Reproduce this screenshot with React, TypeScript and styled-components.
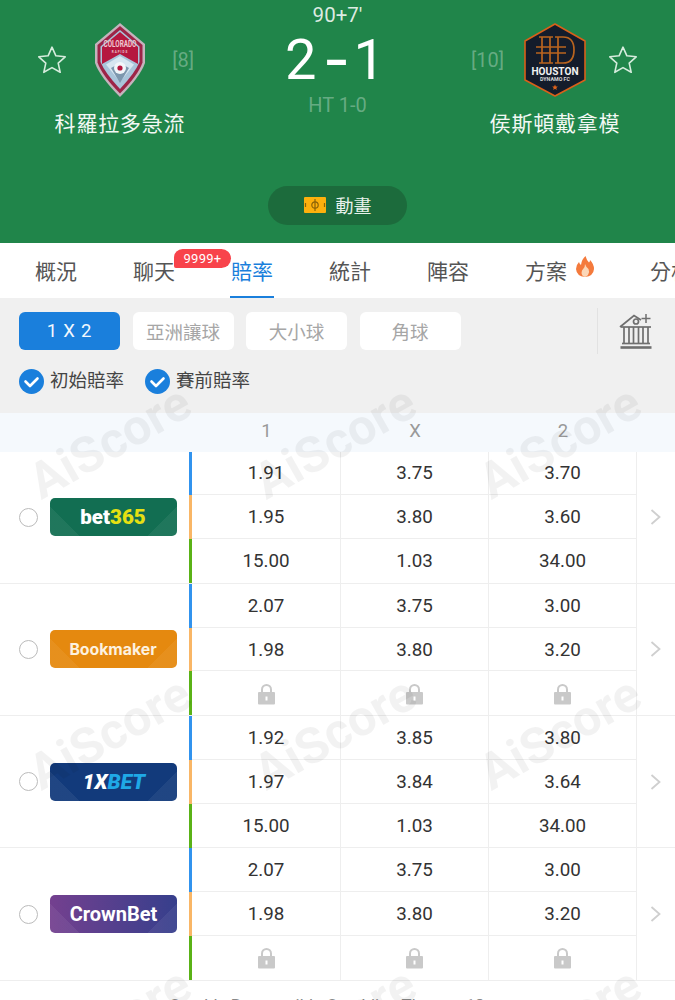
import React from "react";
import styled, { createGlobalStyle } from "styled-components";

const Global = createGlobalStyle`
  html, body { margin: 0; padding: 0; background: #fff; }
  body { font-family: Roboto, "Noto Sans CJK TC", sans-serif; }
  * { box-sizing: border-box; }
`;

const Page = styled.div`
  width: 675px;
  height: 1000px;
  overflow: hidden;
  background: #fff;
`;

const Header = styled.header`
  height: 243px;
  background: #20854a;
  display: grid;
  grid-template-columns: 240px 195px 240px;
`;

const Team = styled.div`
  padding-top: 23px;
  display: flex;
  flex-direction: column;
`;

const TeamTop = styled.div`
  height: 74px;
  display: grid;
  grid-template-columns: 1fr auto 1fr;
  align-items: center;
`;

const StarSlot = styled.div<{ $side: "left" | "right" }>`
  display: flex;
  justify-content: ${(p) => (p.$side === "left" ? "flex-start" : "flex-end")};
  ${(p) => (p.$side === "left" ? "padding-left: 37px;" : "padding-right: 37px;")}
`;

const Rank = styled.div<{ $side: "left" | "right" }>`
  font-size: 20px;
  color: rgba(255, 255, 255, 0.33);
  text-align: ${(p) => p.$side};
  ${(p) => (p.$side === "left" ? "padding-left: 36px;" : "padding-right: 46px;")}
`;

const TeamName = styled.div`
  margin-top: 12px;
  height: 30px;
  line-height: 30px;
  text-align: center;
  font-size: 21px;
  color: #f2f8f4;
  letter-spacing: 0.8px;
`;

const Center = styled.div`
  display: flex;
  flex-direction: column;
  align-items: center;
`;

const Clock = styled.div`
  height: 30px;
  line-height: 30px;
  font-size: 20.5px;
  color: rgba(255, 255, 255, 0.85);
`;

const Score = styled.div`
  height: 60px;
  line-height: 60px;
  font-size: 56px;
  color: #fff;
  display: flex;
  padding-right: 5px;
`;

const ScoreDash = styled.span`
  margin: 0 7px 0 11px;
  font-weight: 500;
  transform: scaleX(1.3);
`;

const HalfTime = styled.div`
  height: 30px;
  line-height: 30px;
  font-size: 20px;
  color: rgba(255, 255, 255, 0.33);
`;

const AnimationPill = styled.div`
  margin-top: 66px;
  width: 139px;
  height: 39px;
  border-radius: 20px;
  background: #1c6b3c;
  color: #e8f2ec;
  font-size: 18px;
  display: flex;
  align-items: center;
  justify-content: center;
  gap: 10px;
  padding-bottom: 1px;
`;

const Tabs = styled.nav`
  height: 55px;
  display: flex;
  padding-left: 7px;
  overflow: hidden;
  background: #fff;
`;

const Tab = styled.div<{ $active?: boolean }>`
  position: relative;
  flex: none;
  height: 55px;
  padding: 0 28px 2px;
  display: flex;
  align-items: center;
  gap: 9px;
  font-size: 21px;
  white-space: nowrap;
  color: ${(p) => (p.$active ? "#1a7fdc" : "#555")};
  ${(p) =>
    p.$active &&
    `&::after {
      content: "";
      position: absolute;
      left: 27px;
      right: 27px;
      bottom: 0;
      height: 2.5px;
      background: #1a7fdc;
    }`}
`;

const Badge = styled.span`
  position: absolute;
  left: 69px;
  top: 6px;
  height: 19px;
  width: 57px;
  border-radius: 9px 10px 10px 2px;
  background: #f8434b;
  color: #fff;
  font-size: 13px;
  line-height: 19px;
  text-align: center;
  letter-spacing: 0.3px;
`;

const Filters = styled.section`
  height: 115px;
  background: #f0f0f0;
  padding: 14px 22px 0 19px;
`;

const MarketRow = styled.div`
  height: 38px;
  display: flex;
  align-items: center;
  gap: 12.5px;
`;

const MarketButton = styled.div<{ $active?: boolean }>`
  width: 101px;
  height: 38px;
  border-radius: 6px;
  padding-bottom: 1px;
  background: ${(p) => (p.$active ? "#1a7fdc" : "#fff")};
  color: ${(p) => (p.$active ? "#f2f8fe" : "#a6a6a6")};
  font-size: 18.5px;
  display: flex;
  align-items: center;
  justify-content: center;
  letter-spacing: ${(p) => (p.$active ? "0.8px" : "0")};
`;

const Divider = styled.div`
  width: 1px;
  height: 46px;
  flex: none;
  margin-left: auto;
  background: #e2e2e2;
`;

const BankSlot = styled.div`
  width: 34px;
  height: 36px;
  margin-left: 9px;
  flex: none;
`;

const CheckRow = styled.div`
  margin-top: 19px;
  display: flex;
  gap: 21px;
`;

const CheckItem = styled.div`
  display: flex;
  align-items: center;
  gap: 6px;
  font-size: 18.5px;
  line-height: 25px;
  color: #444;
`;

const TableArea = styled.section`
  position: relative;
  height: 587px;
`;

const WatermarkLayer = styled.div`
  position: absolute;
  left: -3px;
  top: -117px;
  display: grid;
  grid-template-columns: repeat(3, 225px);
  grid-auto-rows: 291px;
  pointer-events: none;
`;

const Watermark = styled.div`
  display: flex;
  align-items: center;
  justify-content: center;
  font-size: 50px;
  font-weight: 700;
  font-family: Roboto, sans-serif;
  color: rgba(0, 0, 0, 0.05);
  transform: rotate(-29.5deg);
  white-space: nowrap;
`;

const HeadRow = styled.div`
  height: 38.5px;
  padding-bottom: 2px;
  background: #f5f9fd;
  display: grid;
  grid-template-columns: 192px 149px 148px 148px;
  align-items: center;
  text-align: center;
  font-size: 18.5px;
  color: #999;
`;

const OddsRow = styled.div`
  height: 132.33px;
  display: flex;
  border-bottom: 1px solid #eee;
`;

const Maker = styled.div`
  width: 189px;
  flex: none;
  padding-left: 19px;
  display: flex;
  align-items: center;
  gap: 12px;
`;

const Radio = styled.div`
  width: 19px;
  height: 19px;
  flex: none;
  border-radius: 50%;
  border: 1.5px solid #bbb;
`;

const Logo = styled.div<{ $bg: string }>`
  width: 127px;
  height: 38px;
  flex: none;
  border-radius: 5px;
  background: linear-gradient(135deg, transparent 82%, rgba(255, 255, 255, 0.06) 82%),
    linear-gradient(225deg, transparent 82%, rgba(255, 255, 255, 0.06) 82%), ${(p) => p.$bg};
  display: flex;
  align-items: center;
  justify-content: center;
  color: #fff;
  font-weight: 700;
  font-size: 20px;
  white-space: nowrap;
`;

const LogoAccent = styled.span<{ $color: string }>`
  color: ${(p) => p.$color};
`;

const Bet365Name = styled.span`
  font-weight: 900;
  font-size: 20.5px;
  margin-left: -1px;
`;

const BookmakerName = styled.span`
  font-family: Inter, sans-serif;
  font-size: 15.8px;
  color: #fdf2e0;
  margin-left: -1px;
`;

const ItalicName = styled.span`
  font-style: italic;
  font-weight: 900;
  font-size: 21px;
  margin-left: 1px;
`;

const Lines = styled.div`
  display: flex;
  flex-direction: column;
  flex: none;
`;

const Line = styled.div<{ $bar: string }>`
  flex: 1;
  display: grid;
  grid-template-columns: 149px 148px 148px;
  border-left: 3px solid ${(p) => p.$bar};
  &:not(:last-child) > div {
    border-bottom: 1px solid #eee;
  }
`;

const Cell = styled.div`
  display: flex;
  align-items: center;
  justify-content: center;
  font-size: 18.8px;
  color: #333;
  border-right: 1px solid #eee;
  padding-top: 1px;
`;

const Arrow = styled.div`
  flex: 1;
  display: flex;
  align-items: center;
  justify-content: center;
  padding-right: 1px;
`;

const Footer = styled.div`
  padding: 13px 12px 0 0;
  line-height: 22px;
  text-align: center;
  font-size: 16.8px;
  color: #888;
`;

const FlameSvg = styled.svg`
  margin-top: -7px;
`;

const Star = () => (
  <svg width="30" height="30" viewBox="0 0 30 30" fill="none" aria-hidden>
    <path
      d="M15 2.2l3.9 8.6 9.3 1-7 6.3 2 9.2-8.200-4.700-8.200 4.700 2-9.200-7-6.300 9.300-1z"
      stroke="#d6ecdd"
      strokeWidth="1.6"
      strokeLinejoin="round"
    />
  </svg>
);

const ColoradoCrest = () => (
  <svg width="50" height="74" viewBox="0 0 50 74" aria-hidden>
    <path d="M25 0L50 21V40Q45 54 25 74Q5 54 0 40V21Z" fill="#c5b3bd" />
    <path d="M25 3L47.500 22V39.500Q43 52.500 25 70.500Q7 52.500 2.500 39.500V22Z" fill="#9d2447" />
    <path d="M25 7L44.500 23.500V39Q40 50 25 66Q10 50 5.500 39V23.500Z" fill="#a9c4da" />
    <path d="M25 9L43 24V41L25 31L7 41V24Z" fill="#b5173f" />
    <text x="25" y="24" textAnchor="middle" fontSize="8.200" fontWeight="700" fontFamily="Roboto, sans-serif" fill="#f0c8d0" textLength="33" lengthAdjust="spacingAndGlyphs">
      COLORADO
    </text>
    <text x="25" y="29.500" textAnchor="middle" fontSize="3" fontWeight="700" fontFamily="Roboto, sans-serif" fill="#e9c9d0" letterSpacing="1">
      RAPIDS
    </text>
    <path d="M25 33L39 41.500L25 59L11 41.500Z" fill="#d7e6f1" />
    <path d="M25 40L34 45L25 60L16 45Z" fill="#7d97ae" />
    <circle cx="25" cy="45" r="6" fill="#f2f6fa" />
    <circle cx="25" cy="45" r="2.600" fill="#b5173f" />
  </svg>
);

const HoustonCrest = () => (
  <svg width="62" height="74" viewBox="0 0 62 74" aria-hidden>
    <path d="M31 1L61 18V57L31 73L1 57V18Z" fill="#141c2b" stroke="#d9601a" strokeWidth="1.600" strokeLinejoin="round" />
    <g fill="none" stroke="#b9641f" strokeWidth="1.700">
      <path d="M18 14V40M26 14V40M15 14H29M15 40H29" />
      <path d="M34 14V40M31 14H39Q50 14 50 27Q50 40 39 40H31" />
      <path d="M12 24H42M12 30H42" />
    </g>
    <text x="31" y="52" textAnchor="middle" fontSize="10" fontWeight="700" fontFamily="Roboto, sans-serif" fill="#f2f2f2" textLength="47" lengthAdjust="spacingAndGlyphs">
      HOUSTON
    </text>
    <text x="31" y="57.500" textAnchor="middle" fontSize="4.500" fontWeight="700" fontFamily="Roboto, sans-serif" fill="#d9d9d9" textLength="30" lengthAdjust="spacingAndGlyphs">
      DYNAMO FC
    </text>
    <path d="M31 61.500l.8 1.900 2 .2-1.500 1.300.5 2-1.800-1.100-1.800 1.100.5-2-1.500-1.300 2-.2z" fill="#e0631b" />
  </svg>
);

const FieldIcon = () => (
  <svg width="22" height="16" viewBox="0 0 22 16" aria-hidden>
    <rect width="22" height="16" fill="#fdb00d" rx="1" />
    <path d="M11 2V14M1.500 6V10M20.500 6V10" stroke="#8a6208" strokeWidth="1.200" fill="none" />
    <circle cx="11" cy="8" r="3.200" stroke="#8a6208" strokeWidth="1.200" fill="none" />
  </svg>
);

const Flame = () => (
  <FlameSvg width="18" height="21" viewBox="0 0 18 21" aria-hidden>
    <path d="M9.500 0Q10.500 4 13 6.500Q14 5.500 14 4Q18 8 18 13Q17.500 20 9 21Q.5 20 0 13Q0 9 3 6Q3.500 8 5 9Q5.500 3.500 9.500 0Z" fill="#f47a3c" />
    <path d="M9 8Q10 11 12.500 13Q14 16 12 19Q10 21 9 21Q6 20.500 5.500 17Q5.500 14 7.500 12.500Q9 11 9 8Z" fill="#fbd7b8" />
  </FlameSvg>
);

const Bank = () => (
  <svg width="34" height="36" viewBox="0 0 34 36" fill="none" stroke="#6f6f6f" strokeWidth="1.700" aria-hidden>
    <path d="M1 14L15 2.500L22 7" />
    <path d="M2 14H32" />
    <circle cx="17" cy="8.500" r="2.500" />
    <path d="M27 1V10M22.500 5.500H31.500" strokeWidth="1.500" />
    <path d="M5 14V30M10 14V30M14.500 14V30M19.500 14V30M24 14V30M29 14V30" />
    <path d="M3 30.500H31" />
    <path d="M1.500 34.500H32.500" strokeWidth="2.600" />
  </svg>
);

const CheckedDot = () => (
  <svg width="25" height="25" viewBox="0 0 25 25" aria-hidden>
    <circle cx="12.500" cy="12.500" r="12.500" fill="#1a7fdc" />
    <path d="M6.500 12.500L11 17L18.500 9.500" stroke="#fff" strokeWidth="2.600" fill="none" strokeLinecap="round" strokeLinejoin="round" />
  </svg>
);

const Lock = () => (
  <svg width="17" height="22" viewBox="0 0 17 22" aria-hidden>
    <path d="M4 10V6.500a4.500 4.500 0 0 1 9 0V10" stroke="#c9c9c9" strokeWidth="2" fill="none" />
    <path fillRule="evenodd" d="M1 9h15a1 1 0 0 1 1 1v10.500a1 1 0 0 1-1 1H1a1 1 0 0 1-1-1V10a1 1 0 0 1 1-1zM7.500 13.500v4h2v-4z" fill="#c9c9c9" />
  </svg>
);

const Chevron = () => (
  <svg width="11" height="16" viewBox="0 0 11 16" fill="none" aria-hidden>
    <path d="M1.500 1L9.500 8L1.500 15" stroke="#cfcfcf" strokeWidth="1.800" />
  </svg>
);

const BARS = ["#3193ee", "#f9b666", "#5ab217"];

type Book = { key: string; bg: string; logo: React.ReactNode; rows: (string[] | null)[] };

const BOOKS: Book[] = [
  {
    key: "bet365",
    bg: "#126e52",
    logo: (
      <Bet365Name>
        bet<LogoAccent $color="#e6e012">365</LogoAccent>
      </Bet365Name>
    ),
    rows: [
      ["1.91", "3.75", "3.70"],
      ["1.95", "3.80", "3.60"],
      ["15.00", "1.03", "34.00"],
    ],
  },
  {
    key: "bookmaker",
    bg: "#e5890f",
    logo: <BookmakerName>Bookmaker</BookmakerName>,
    rows: [
      ["2.07", "3.75", "3.00"],
      ["1.98", "3.80", "3.20"],
      null,
    ],
  },
  {
    key: "1xbet",
    bg: "#123a7b",
    logo: (
      <ItalicName>
        1X<LogoAccent $color="#1fa8e6">BET</LogoAccent>
      </ItalicName>
    ),
    rows: [
      ["1.92", "3.85", "3.80"],
      ["1.97", "3.84", "3.64"],
      ["15.00", "1.03", "34.00"],
    ],
  },
  {
    key: "crownbet",
    bg: "linear-gradient(90deg, #74408f, #363f8c)",
    logo: "CrownBet",
    rows: [
      ["2.07", "3.75", "3.00"],
      ["1.98", "3.80", "3.20"],
      null,
    ],
  },
];

const TABS = ["概況", "聊天", "賠率", "統計", "陣容", "方案", "分析"];
const MARKETS = ["1 X 2", "亞洲讓球", "大小球", "角球"];

export default function App() {
  return (
    <Page>
      <Global />
      <Header>
        <Team>
          <TeamTop>
            <StarSlot $side="left">
              <Star />
            </StarSlot>
            <ColoradoCrest />
            <Rank $side="right">[8]</Rank>
          </TeamTop>
          <TeamName>科羅拉多急流</TeamName>
        </Team>
        <Center>
          <Clock>90+7'</Clock>
          <Score>
            <span>2</span>
            <ScoreDash>-</ScoreDash>
            <span>1</span>
          </Score>
          <HalfTime>HT 1-0</HalfTime>
          <AnimationPill>
            <FieldIcon />
            動畫
          </AnimationPill>
        </Center>
        <Team>
          <TeamTop>
            <Rank $side="left">[10]</Rank>
            <HoustonCrest />
            <StarSlot $side="right">
              <Star />
            </StarSlot>
          </TeamTop>
          <TeamName>侯斯頓戴拿模</TeamName>
        </Team>
      </Header>

      <Tabs>
        {TABS.map((t) => (
          <Tab key={t} $active={t === "賠率"}>
            {t}
            {t === "聊天" && <Badge>9999+</Badge>}
            {t === "方案" && <Flame />}
          </Tab>
        ))}
      </Tabs>

      <Filters>
        <MarketRow>
          {MARKETS.map((m, i) => (
            <MarketButton key={m} $active={i === 0}>
              {m}
            </MarketButton>
          ))}
          <Divider />
          <BankSlot>
            <Bank />
          </BankSlot>
        </MarketRow>
        <CheckRow>
          <CheckItem>
            <CheckedDot />
            初始賠率
          </CheckItem>
          <CheckItem>
            <CheckedDot />
            賽前賠率
          </CheckItem>
        </CheckRow>
      </Filters>

      <TableArea>
        <HeadRow>
          <span />
          <span>1</span>
          <span>X</span>
          <span>2</span>
        </HeadRow>
        {BOOKS.map((b) => (
          <OddsRow key={b.key}>
            <Maker>
              <Radio />
              <Logo $bg={b.bg}>{b.logo}</Logo>
            </Maker>
            <Lines>
              {b.rows.map((r, i) => (
                <Line key={i} $bar={BARS[i]}>
                  {[0, 1, 2].map((c) => (
                    <Cell key={c}>{r ? r[c] : <Lock />}</Cell>
                  ))}
                </Line>
              ))}
            </Lines>
            <Arrow>
              <Chevron />
            </Arrow>
          </OddsRow>
        ))}
        <Footer>Gamble Responsible Gambling Therapy 18+</Footer>
        <WatermarkLayer>
          {Array.from({ length: 9 }).map((_, i) => (
            <Watermark key={i}>AiScore</Watermark>
          ))}
        </WatermarkLayer>
      </TableArea>
    </Page>
  );
}
